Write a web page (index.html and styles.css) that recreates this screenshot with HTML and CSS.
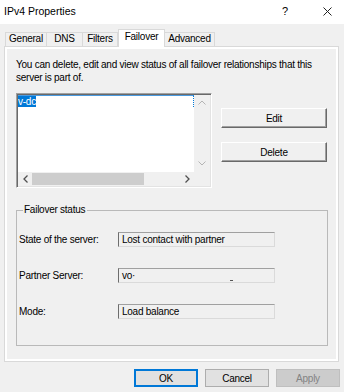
FILE: index.html
```html
<!DOCTYPE html>
<html lang="en">
<head>
  <meta charset="UTF-8">
  <meta name="viewport" content="width=device-width, initial-scale=1.0">
  <title>IPv4 Properties</title>
  <link rel="stylesheet" href="styles.css">
</head>
<body>
  <div class="titlebar">
    <span class="title">IPv4 Properties</span>
    <span class="help">?</span>
    <svg class="close" width="9" height="9" viewBox="0 0 9 9">
      <path d="M0.5 0.5 L8.5 8.5 M8.5 0.5 L0.5 8.5" stroke="#222" stroke-width="1" fill="none"/>
    </svg>
  </div>

  <div class="tabs">
    <div class="tab tab-general">General</div>
    <div class="tab tab-dns">DNS</div>
    <div class="tab tab-filters">Filters</div>
    <div class="tab tab-failover active">Failover</div>
    <div class="tab tab-advanced">Advanced</div>
  </div>

  <div class="panel">
    <div class="page">
      <p class="intro">You can delete, edit and view status of all failover relationships that this<br>server is part of.</p>

      <div class="list-row">
        <div class="listbox">
          <div class="items">
            <div class="item"><span class="sel">v-dc</span></div>
          </div>
          <div class="vscroll">
            <svg width="8" height="5" viewBox="0 0 8 5"><path d="M0.5 4.5 L4 1 L7.5 4.5" stroke="#b4b4b4" fill="none"/></svg>
            <svg width="8" height="5" viewBox="0 0 8 5"><path d="M0.5 0.5 L4 4 L7.5 0.5" stroke="#b4b4b4" fill="none"/></svg>
          </div>
          <div class="hscroll">
            <span class="arrow">
              <svg width="5" height="8" viewBox="0 0 5 8"><path d="M4.5 0.5 L1 4 L4.5 7.5" stroke="#505050" stroke-width="1.3" fill="none"/></svg>
            </span>
            <span class="track"><span class="thumb"></span></span>
            <span class="arrow">
              <svg width="5" height="8" viewBox="0 0 5 8"><path d="M0.5 0.5 L4 4 L0.5 7.5" stroke="#505050" stroke-width="1.3" fill="none"/></svg>
            </span>
          </div>
          <div class="corner"></div>
        </div>

        <div class="side-buttons">
          <button class="classic btn-edit">Edit</button>
          <button class="classic btn-delete">Delete</button>
        </div>
      </div>

      <fieldset class="group">
        <legend>Failover status</legend>
        <div class="status-grid">
          <span class="label">State of the server:</span>
          <span class="field">Lost contact with partner</span>
          <span class="label">Partner Server:</span>
          <span class="field">vo&middot;<span class="blot"></span></span>
          <span class="label">Mode:</span>
          <span class="field">Load balance</span>
        </div>
      </fieldset>
    </div>
  </div>

  <div class="footer">
    <button class="btn default">OK</button>
    <button class="btn">Cancel</button>
    <button class="btn" disabled>Apply</button>
  </div>
</body>
</html>
```

FILE: styles.css
```css
body {
  margin: 0;
  width: 344px;
  height: 392px;
  overflow: hidden;
  background-color: #f0f0f0;
  font-family: 'Liberation Sans', Arial, sans-serif;
  font-size: 10px;
  letter-spacing: -0.25px;
  color: #000;
}
.titlebar {
  height: 24px;
  background-color: #fff;
  display: flex;
  align-items: center;
  padding: 0 0 2px 4px;
  box-sizing: border-box;
}
.title {
  font-size: 10.5px;
  letter-spacing: 0;
  flex: 1;
}
.help {
  font-size: 11px;
  letter-spacing: 0;
  margin-right: 35px;
}
.close {
  margin-right: 12px;
}
.tabs {
  display: flex;
  align-items: flex-end;
  height: 17px;
  margin-top: 5px;
  padding-left: 5px;
}
.tab {
  box-sizing: border-box;
  height: 14px;
  line-height: 12px;
  border: 1px solid #d9d9d9;
  border-bottom: none;
  background-color: #f0f0f0;
  text-align: center;
}
.tab + .tab {
  border-left: none;
}
.tab-general { width: 42px; }
.tab-dns { width: 36px; }
.tab-filters { width: 35px; }
.tab-failover { width: 47px; }
.tab-advanced { width: 50px; }
.tab.active {
  position: relative;
  z-index: 1;
  height: 18px;
  margin-bottom: -1px;
  line-height: 13px;
  background-color: #fff;
  border-left: 1px solid #d9d9d9;
}
.tab.active + .tab {
  border-left: none;
}
.panel {
  margin-left: 4px;
  width: 335px;
  height: 316px;
  box-sizing: border-box;
  border: 1px solid #d9d9d9;
  background-color: #fff;
  padding: 2px;
}
.page {
  height: 100%;
  background-color: #f0f0f0;
  padding: 9px 0 0 9px;
  box-sizing: border-box;
}
.intro {
  margin: 0;
  line-height: 13px;
}
.list-row {
  display: flex;
  margin-top: 9px;
}
.listbox {
  width: 196px;
  height: 95px;
  box-sizing: border-box;
  border: 1px solid;
  border-color: #a0a0a0 #fff #fff #a0a0a0;
  box-shadow: inset 1px 1px #696969, inset -1px -1px #e3e3e3;
  padding: 1px;
  display: grid;
  grid-template-columns: 1fr 16px;
  grid-template-rows: 1fr 14px;
}
.items {
  background-color: #fff;
}
.item {
  height: 11px;
  line-height: 11px;
  border-top: 1px solid #4a9ae0;
  border-right: 1px dotted #0078d7;
}
.sel {
  display: inline-block;
  width: 18px;
  background-color: #0078d7;
  color: #fff;
  overflow: hidden;
  white-space: nowrap;
}
.vscroll {
  background-color: #f0f0f0;
  display: flex;
  flex-direction: column;
  align-items: center;
  justify-content: space-between;
  padding: 5px 0 6px;
}
.hscroll {
  background-color: #f0f0f0;
  display: flex;
  align-items: center;
}
.arrow {
  width: 14px;
  display: flex;
  justify-content: center;
}
.track {
  flex: 1;
  height: 100%;
  display: flex;
  align-items: center;
}
.thumb {
  width: 112px;
  height: 12px;
  background-color: #cdcdcd;
}
.corner {
  background-color: #f0f0f0;
}
.side-buttons {
  display: flex;
  flex-direction: column;
  margin-left: 9px;
  padding-top: 15px;
  gap: 14px;
}
.classic {
  width: 106px;
  height: 20px;
  font-family: inherit;
  font-size: 10px;
  letter-spacing: -0.25px;
  background-color: #f0f0f0;
  border: 1px solid;
  border-color: #fff #696969 #696969 #fff;
  box-shadow: inset -1px -1px #a0a0a0;
  padding: 0;
  color: #000;
}
.group {
  margin: 16px 0 0 0;
  width: 312px;
  height: 142px;
  box-sizing: border-box;
  border: 1px solid #b9b9b9;
  padding: 0 0 0 2px;
}
.group legend {
  margin-left: 4px;
  padding: 0 2px 0 1px;
  line-height: 12px;
}
.status-grid {
  display: grid;
  grid-template-columns: 99px 157px;
  row-gap: 21px;
  margin-top: 16px;
  align-items: center;
}
.field {
  height: 15px;
  line-height: 13px;
  box-sizing: border-box;
  border: 1px solid;
  border-color: #a0a0a0 #dadada #dadada #6d6d6d;
  padding-left: 3px;
  white-space: nowrap;
}
.blot {
  display: inline-block;
  width: 3px;
  height: 1px;
  background-color: #555;
  margin-left: 95px;
  vertical-align: -2px;
}
.footer {
  display: flex;
  justify-content: flex-end;
  gap: 7px;
  margin-top: 7px;
  padding-right: 4px;
}
.btn {
  width: 64px;
  height: 18px;
  font-family: inherit;
  font-size: 10px;
  letter-spacing: -0.25px;
  background-color: #e1e1e1;
  border: 1px solid #adadad;
  padding: 0;
  color: #000;
}
.btn.default {
  border: 1px solid #0078d7;
  box-shadow: inset 0 0 0 1px #0078d7;
}
.btn:disabled {
  background-color: #cccccc;
  border-color: #bfbfbf;
  color: #838383;
}
```
